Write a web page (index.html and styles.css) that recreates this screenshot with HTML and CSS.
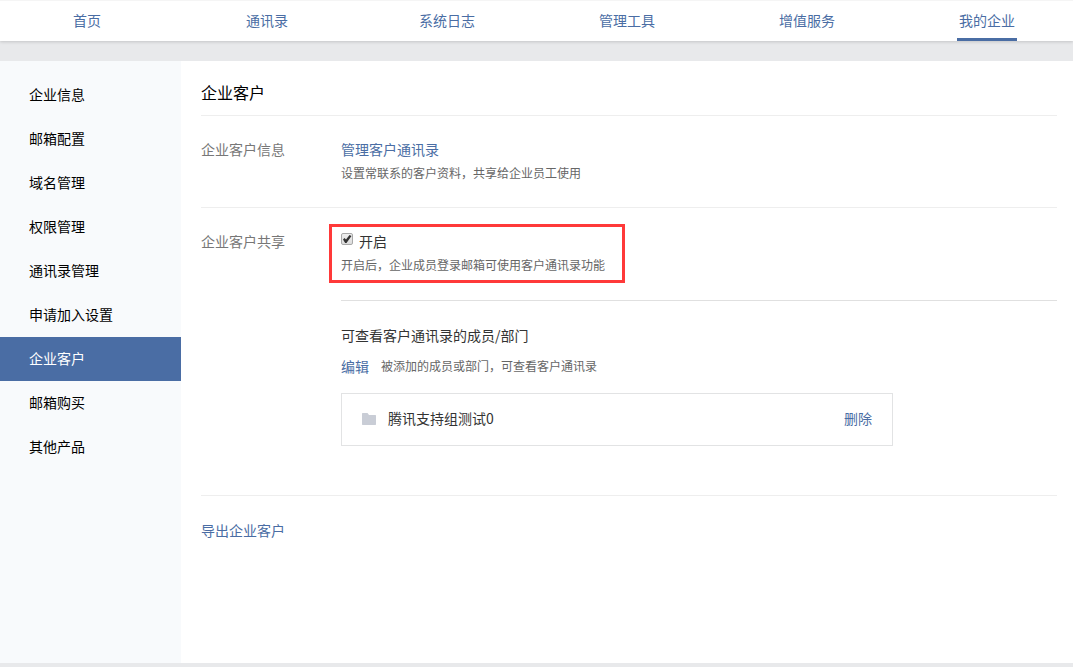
FILE: index.html
```html
<!DOCTYPE html>
<html lang="zh-CN">
<head>
<meta charset="utf-8">
<meta name="viewport" content="width=device-width, initial-scale=1">
<title>企业客户</title>
<link rel="stylesheet" href="styles.css">
</head>
<body>
<header class="topbar">
  <nav class="topnav">
    <a class="topnav-link" href="#">首页</a>
    <a class="topnav-link" href="#">通讯录</a>
    <a class="topnav-link" href="#">系统日志</a>
    <a class="topnav-link" href="#">管理工具</a>
    <a class="topnav-link" href="#">增值服务</a>
    <a class="topnav-link topnav-link-active" href="#">我的企业</a>
  </nav>
</header>
<div class="layout">
  <nav class="sidebar">
    <a class="side-link" href="#">企业信息</a>
    <a class="side-link" href="#">邮箱配置</a>
    <a class="side-link" href="#">域名管理</a>
    <a class="side-link" href="#">权限管理</a>
    <a class="side-link" href="#">通讯录管理</a>
    <a class="side-link" href="#">申请加入设置</a>
    <a class="side-link side-link-active" href="#">企业客户</a>
    <a class="side-link" href="#">邮箱购买</a>
    <a class="side-link" href="#">其他产品</a>
  </nav>
  <main class="content">
    <h1 class="title">企业客户</h1>
    <section class="row">
      <h2 class="row-label">企业客户信息</h2>
      <div class="row-body row-stack">
        <a class="link" href="#">管理客户通讯录</a>
        <p class="hint">设置常联系的客户资料，共享给企业员工使用</p>
      </div>
    </section>
    <section class="row row-share">
      <h2 class="row-label">企业客户共享</h2>
      <div class="row-body">
        <div class="highlight row-stack">
          <label class="toggle"><input class="checkbox" type="checkbox" checked>开启</label>
          <p class="hint">开启后，企业成员登录邮箱可使用客户通讯录功能</p>
        </div>
        <div class="members">
          <h3 class="members-title">可查看客户通讯录的成员/部门</h3>
          <div class="members-edit">
            <a class="link" href="#">编辑</a>
            <p class="hint">被添加的成员或部门，可查看客户通讯录</p>
          </div>
          <div class="member">
            <svg class="folder" viewBox="0 0 14 12" aria-hidden="true"><path d="M0 .5.5 0H5.5L7 2H13.5L14 2.5V11.5L13.5 12H.5L0 11.5Z"/></svg>
            <span class="member-name">腾讯支持组测试0</span>
            <button class="remove" type="button">删除</button>
          </div>
        </div>
      </div>
    </section>
    <a class="link export" href="#">导出企业客户</a>
  </main>
</div>
</body>
</html>
```

FILE: styles.css
```css
* {
  box-sizing: border-box;
}

body {
  margin: 0;
  min-height: 100vh;
  display: flex;
  flex-direction: column;
  background: #e8e9eb;
  color: #333;
  font: 14px/22px "Noto Sans CJK SC", sans-serif;
  overflow-x: hidden;
}

h1, h2, h3, p {
  margin: 0;
  font-weight: normal;
}

a {
  text-decoration: none;
}

.topbar {
  background: #fff;
  border-top: 1px solid #f5f5f5;
  box-shadow: 0 1px 3px rgba(0, 0, 0, 0.16);
}

.topnav {
  display: grid;
  grid-template-columns: repeat(6, 1fr);
  justify-items: center;
  margin: 0 -4px 0 -3px;
}

.topnav-link {
  padding: 1px 2px 0;
  border-bottom: 3px solid transparent;
  color: #4a6da4;
  line-height: 36px;
}

.topnav-link-active {
  border-bottom-color: #4a6da4;
}

.layout {
  display: flex;
  flex: 1;
  margin: 20px 0 4px;
  background: #fff;
}

.sidebar {
  flex: none;
  width: 181px;
  padding-top: 12px;
  background: #f8fafc;
}

.side-link {
  display: block;
  padding: 0 0 2px 29px;
  color: #000;
  line-height: 42px;
}

.side-link-active {
  background: #4a6da4;
  color: #fff;
}

.content {
  flex: 1;
  padding: 0 16px 0 20px;
}

.title {
  padding: 8px 0 0;
  border-bottom: 1px solid #eee;
  color: #000;
  font-size: 16px;
  line-height: 46px;
}

.row {
  display: flex;
  padding: 22px 0 23px;
  border-bottom: 1px solid #eee;
}

.row-share {
  padding-bottom: 49px;
}

.row-label {
  flex: none;
  width: 140px;
  color: #777;
  font-size: 14px;
}

.row-body {
  flex: 1;
}

.row-stack {
  display: flex;
  flex-direction: column;
  align-items: flex-start;
  gap: 2px;
}

.link {
  color: #4a6da4;
}

.hint {
  color: #666;
  font-size: 12px;
}

.highlight {
  width: fit-content;
  margin: -6px 0 17px -12px;
  padding: 3px 17px 4px 9px;
  border: 3px solid #ff3939;
}

.toggle {
  display: flex;
  gap: 6px;
}

.checkbox {
  appearance: none;
  flex: none;
  width: 12px;
  height: 12px;
  margin: 3px 0 0;
  border: 1px solid #a8a8a8;
  border-radius: 2px;
  background: linear-gradient(#eee, #dcdcdc);
}

.checkbox:checked::before {
  content: "";
  display: block;
  height: 10px;
  background: #333;
  clip-path: polygon(10% 55%, 25% 40%, 40% 55%, 75% 10%, 95% 20%, 45% 90%, 32% 90%);
}

.members {
  padding-top: 23px;
  border-top: 1px solid #e0e0e0;
}

.members-title {
  font-size: 14px;
}

.members-edit {
  display: flex;
  align-items: center;
  gap: 12px;
  margin: 9px 0 16px;
}

.member {
  display: flex;
  align-items: center;
  max-width: 552px;
  padding: 13px 20px 15px;
  border: 1px solid #e2e3e4;
  line-height: 23px;
}

.folder {
  width: 14px;
  height: 12px;
  margin-right: 12px;
  fill: #c9cdd6;
}

.remove {
  margin-left: auto;
  padding: 0;
  border: 0;
  background: none;
  color: #4a6da4;
  font: inherit;
  cursor: pointer;
}

.export {
  display: inline-block;
  padding-top: 23px;
}
```
